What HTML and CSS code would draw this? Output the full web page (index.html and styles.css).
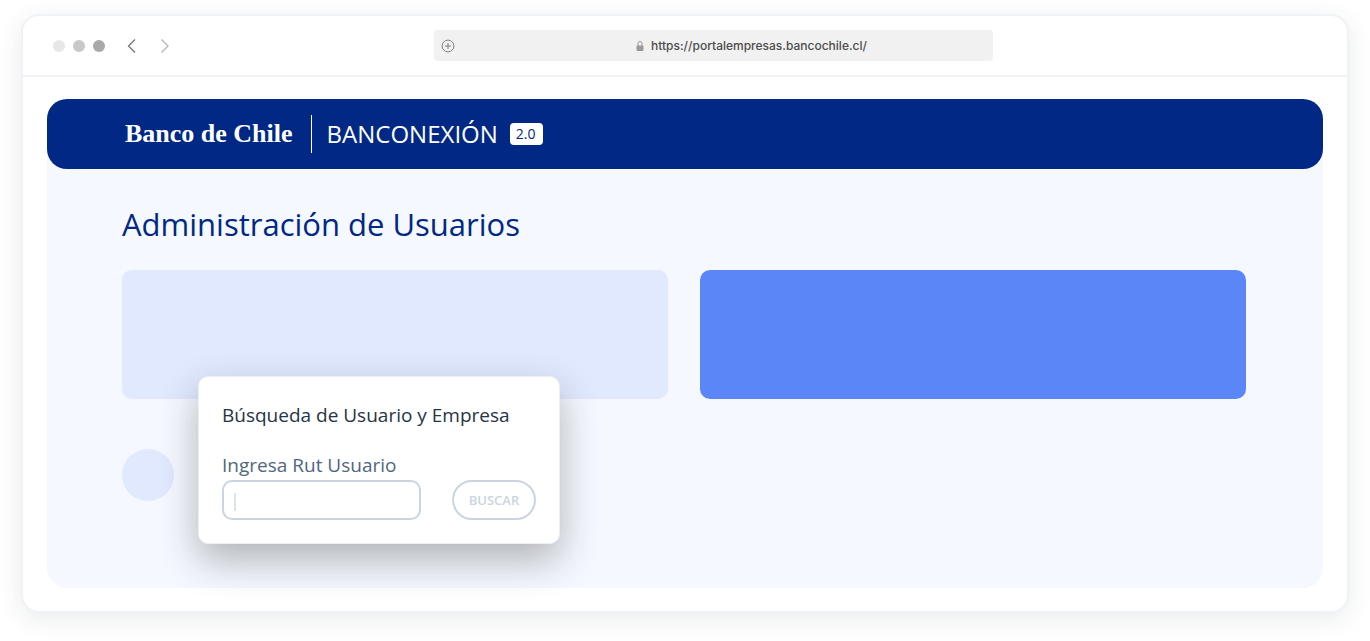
FILE: index.html
```html
<!DOCTYPE html>
<html lang="es">
<head>
<meta charset="utf-8">
<meta name="viewport" content="width=device-width, initial-scale=1">
<title>Administración de Usuarios</title>
<link rel="stylesheet" href="styles.css">
</head>
<body>
<div class="window">
  <div class="toolbar">
    <div class="controls">
      <span class="dot dot-light"></span>
      <span class="dot dot-mid"></span>
      <span class="dot dot-dark"></span>
      <button class="nav nav-back" type="button" aria-label="Atrás"><svg width="10" height="16" viewBox="0 0 10 16"><path d="M8 1.500 1.500 8l6.500 6.500"/></svg></button>
      <button class="nav nav-forward" type="button" aria-label="Adelante"><svg width="10" height="16" viewBox="0 0 10 16"><path d="M1.500 1.500 8 8l-6.500 6.500"/></svg></button>
    </div>
    <div class="address">
      <svg class="plus" width="14" height="14" viewBox="0 0 14 14"><circle cx="7" cy="7" r="5.900"/><path d="M7 4v6M4 7h6"/></svg>
      <span class="url">
        <svg class="lock" width="8" height="12" viewBox="0 0 8 12"><path class="shackle" d="M2 6V3.500a2 2 0 0 1 4 0V6"/><rect x="0.500" y="5.500" width="7" height="5.500" rx="1"/></svg>
        <span>https://portalempresas.bancochile.cl/</span>
      </span>
    </div>
  </div>
  <main class="page">
    <header class="banner">
      <span class="brand">Banco de Chile</span>
      <span class="product">BANCONEXIÓN</span>
      <span class="version">2.0</span>
    </header>
    <section class="content">
      <h1 class="title">Administración de Usuarios</h1>
      <div class="board">
        <div class="cards">
          <div class="card card-pale"></div>
          <div class="card card-blue"></div>
        </div>
        <div class="avatar"></div>
        <form class="search">
          <h2 class="search-title">Búsqueda de Usuario y Empresa</h2>
          <label class="search-label" for="rut">Ingresa Rut Usuario</label>
          <div class="search-row">
            <input class="search-input" id="rut" type="text">
            <button class="search-button" type="button">BUSCAR</button>
          </div>
        </form>
      </div>
    </section>
  </main>
</div>
</body>
</html>
```

FILE: styles.css
```css
* {
  box-sizing: border-box;
}

body {
  margin: 0;
  padding: 14px 21px 28px;
  background: #fff;
  font-family: "Open Sans", "Noto Sans", sans-serif;
}

.window {
  padding-bottom: 1px;
  border: 2px solid #f1f2f7;
  border-radius: 18px;
  background: #fff;
  box-shadow: 0 6px 24px rgba(40, 60, 60, 0.1);
}

.toolbar {
  display: grid;
  grid-template-columns: 411fr 559fr 354fr;
  align-items: center;
  height: 61px;
  border-bottom: 2px solid #f2f3f7;
}

.controls {
  display: flex;
  align-items: center;
  gap: 8px;
  padding-left: 30px;
}

.dot {
  width: 12px;
  height: 12px;
  border-radius: 50%;
}

.dot-light { background: #e7e7e7; }
.dot-mid { background: #c8c8c8; }
.dot-dark { background: #a9a9a9; }

.nav {
  display: flex;
  padding: 0;
  border: 0;
  background: none;
}

.nav svg {
  fill: none;
  stroke-width: 1.300;
}

.nav-back {
  margin-left: 14px;
  stroke: #757575;
}

.nav-forward {
  margin-left: 15px;
  stroke: #b5b5b5;
}

.address {
  display: flex;
  align-items: center;
  height: 31px;
  padding: 0 7px;
  border-radius: 4px;
  background: #f1f1f1;
}

.plus {
  fill: none;
  stroke: #808080;
}

.url {
  display: flex;
  flex: 1;
  align-items: center;
  justify-content: center;
  gap: 7px;
  padding-left: 62px;
  color: #4c4c4c;
  font: 500 12px/16px Inter, sans-serif;
}

.lock {
  fill: #999;
}

.shackle {
  fill: none;
  stroke: #999;
}

.page {
  margin: 22px 24px;
  border-radius: 20px;
  background: #f5f8ff;
}

.banner {
  display: flex;
  align-items: center;
  height: 70px;
  padding: 0 78px;
  border-radius: 20px;
  background: #002884;
  color: #fff;
}

.brand {
  font: bold 26px/36px "Liberation Serif", serif;
  white-space: nowrap;
}

.product {
  margin-left: 18px;
  padding-left: 15px;
  border-left: 1px solid #fff;
  font-size: 24px;
  font-weight: 400;
  line-height: 38px;
}

.version {
  margin-left: 12px;
  padding: 0 7px 0 6px;
  border-radius: 4px;
  background: #fff;
  color: #002884;
  font-size: 14px;
  line-height: 22px;
}

.content {
  padding: 34px 77px 87px 75px;
}

.title {
  margin: 0 0 25px;
  color: #002884;
  font-size: 31px;
  font-weight: 500;
  line-height: 42px;
}

.board {
  position: relative;
}

.cards {
  display: grid;
  grid-template-columns: 1fr 1fr;
  gap: 32px;
}

.card {
  height: 129px;
  border-radius: 10px;
}

.card-pale { background: #e1e9ff; }
.card-blue { background: #5b86f8; }

.avatar {
  width: 52px;
  height: 52px;
  margin-top: 50px;
  border-radius: 50%;
  background: #e1e9ff;
}

.search {
  position: absolute;
  top: 106px;
  left: 76px;
  width: 362px;
  padding: 24px 23px 23px;
  border: 1px solid #ebeef2;
  border-radius: 10px;
  background: #fff;
  box-shadow: 0 16px 38px rgba(30, 35, 30, 0.32);
}

.search-title {
  margin: 0 0 23px;
  color: #273444;
  font-size: 19px;
  font-weight: 400;
  line-height: 28px;
}

.search-label {
  display: block;
  color: #52667f;
  font-size: 19px;
  line-height: 26px;
}

.search-row {
  display: flex;
  justify-content: space-between;
  margin-top: 2px;
}

.search-input {
  width: 199px;
  height: 40px;
  padding: 0 10px;
  border: 2px solid #cbd5e1;
  border-radius: 10px;
  background: linear-gradient(#dce2ec, #dce2ec) 10px 11px / 2px 18px no-repeat #fff;
  font: inherit;
}

.search-button {
  width: 84px;
  height: 40px;
  padding: 0;
  border: 2px solid #cbd5e1;
  border-radius: 20px;
  background: #fff;
  color: #cbd5e1;
  font: 600 13px/16px "Open Sans", sans-serif;
}
```
